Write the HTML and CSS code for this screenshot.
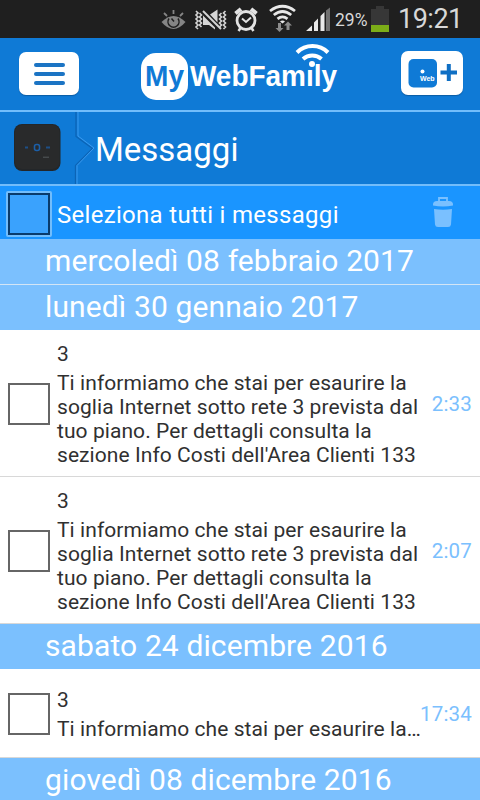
FILE: index.html
```html
<!doctype html>
<html lang="it">
  <head>
    <meta charset="utf-8">
    <title>MyWebFamily - Messaggi</title>
    <link rel="stylesheet" href="styles.css">
  </head>
  <body>
	<div class="statusbar">
		<svg class="status-icons" width="170" height="38" viewBox="160 0 170 38">
			<!-- eye -->
			<path fill="#858585" d="M161.500 22Q173.500 10 185.500 22Q173.500 36 161.500 22z"/>
			<path fill="none" stroke="#858585" stroke-width="1.800" d="M164 13l3 3M173.500 10v4M183 13l-3 3"/>
			<path fill="none" stroke="#1f1f1f" stroke-width="1.500" d="M169 18.500a5.500 5.500 0 1 0 9 0M171.500 18.500l2.500 3"/>
			<!-- vibrate / mute -->
			<g fill="none" stroke="#d5d5d5" stroke-width="1.600">
				<path d="M196 11l2 2-2 2 2 2-2 2 2 2-2 2 2 2-2 2 2 2M199.500 13l2 2-2 2 2 2-2 2 2 2-2 2 2 2"/>
				<path d="M225.500 11l-2 2 2 2-2 2 2 2-2 2 2 2-2 2 2 2-2 2M221.500 13l-2 2 2 2-2 2 2 2-2 2 2 2-2 2"/>
			</g>
			<path fill="#d5d5d5" d="M203 15.500l12 12v2l-6-4.500h-6zM210 14.500l7.500-5v13z"/>
			<path stroke="#d5d5d5" stroke-width="2" d="M203 11l18 18"/>
			<!-- alarm -->
			<g fill="none" stroke="#e3e3e3">
				<circle cx="246" cy="20.500" r="9" stroke-width="2.800"/>
				<path stroke-width="2" d="M242 18.500l4 3.500 5-4.500"/>
				<path stroke-width="4" d="M235.500 13.500l5.500-4.500M251 9l5.500 4.500"/>
				<path stroke-width="2.500" d="M240.500 28l-2 3M251.500 28l2 3"/>
			</g>
			<!-- wifi -->
			<g fill="none" stroke="#e8e8e8" stroke-width="2.800">
				<path d="M270 11Q282.500 1.500 295 11M273.800 15Q282.500 8 291.200 15M277.500 18.800Q282.500 15 287.500 18.800"/>
			</g>
			<path fill="#e8e8e8" d="M280 21.500q2.500-2 5 0l-2.500 2z"/>
			<path fill="#8b8b8b" d="M278 23h3v5h2.500l-4 4-4-4h2.500zM286.500 30h3v-4.500h2.500l-4-4-4 4h2.500z"/>
			<!-- signal -->
			<path fill="#e8e8e8" d="M306 31l6-5.500V31zM314 22.500l4-4V31h-4zM320.500 16l4-4V31h-4z"/>
			<path fill="#707070" d="M326 10.500l4-3V31h-4z"/>
		</svg>
		<span class="percent">29%</span>
		<span class="battery"><i></i></span>
		<span class="clock">19:21</span>
	</div>
	<div class="header">
		<a class="button menu"><i></i><i></i><i></i></a>
		<svg class="logo" width="210" height="72" viewBox="135 38 210 72">
			<rect x="141" y="53" width="47" height="47" rx="15" fill="#fff"/>
			<text class="my" x="145" y="86" textLength="39" lengthAdjust="spacingAndGlyphs">My</text>
			<text class="web" x="190" y="85.500" textLength="147" lengthAdjust="spacingAndGlyphs">WebFamıly</text>
			<circle cx="312" cy="64" r="3" fill="#fff"/>
			<path fill="none" stroke="#fff" stroke-width="4" d="M297 52.500A22 22 0 0 1 328 52.500M303 59A14 14 0 0 1 321.500 59"/>
		</svg>
		<a class="button add">
			<svg width="62" height="44" viewBox="0 0 62 44">
				<rect x="7.500" y="8" width="28.500" height="28.500" rx="5" fill="#0f7ad6"/>
				<circle cx="21.500" cy="20.500" r="2" fill="#fff"/>
				<text class="tiny" x="19" y="30">Web</text>
				<path stroke="#0f6fc4" stroke-width="4" d="M39.500 21.500h16.500M47.800 13v17"/>
			</svg>
		</a>
	</div>
	<div class="titlebar">
		<div class="device">
			<svg width="96" height="72" viewBox="0 112 96 72">
				<rect x="14" y="124" width="46.500" height="47" rx="8" fill="#232629"/>
				<rect x="15" y="125" width="44.500" height="44" rx="7" fill="#292a2b"/>
				<rect x="34.500" y="144.500" width="5" height="6" rx="2" fill="none" stroke="#1c5fa8" stroke-width="1.600"/>
				<path stroke="#1d4f87" stroke-width="1.800" d="M25 147.500h3M46 147.500h4"/>
				<path stroke="#55595c" d="M43 157.200h6"/>
				<path fill="none" stroke="#0b64b6" stroke-width="1.300" d="M76 112v24.500l16.500 12-17 17V184"/>
				<path fill="none" stroke="#3a9af0" stroke-width="1" d="M78 112v24l16 12-17 17.500V184"/>
			</svg>
		</div>
		<h1>Messaggi</h1>
	</div>
	<div class="selectall">
		<span class="check"></span>
		<span class="label">Seleziona tutti i messaggi</span>
		<svg class="trash" width="22" height="32" viewBox="0 0 22 32">
			<path fill="none" stroke="#7ac0ff" stroke-width="1.800" d="M7 6V2h8v4"/>
			<path fill="#7ac0ff" d="M1 8.500q0-3.500 4-3.500h12q4 0 4 3.500v1q-10 2-20 0zM2 13q9 1.500 18 0l-1 15.500q-.3 2.500-3 2.500H6q-2.700 0-3-2.500z"/>
		</svg>
	</div>
	<h2>mercoledì 08 febbraio 2017</h2>
	<h2 class="last">lunedì 30 gennaio 2017</h2>
	<div class="message">
		<span class="check"></span>
		<div class="text">
			<b>3</b>
			<p>Ti informiamo che stai per esaurire la<br>soglia Internet sotto rete 3 prevista dal<br>tuo piano. Per dettagli consulta la<br>sezione Info Costi dell'Area Clienti 133</p>
		</div>
		<span class="time">2:33</span>
	</div>
	<div class="message">
		<span class="check"></span>
		<div class="text">
			<b>3</b>
			<p>Ti informiamo che stai per esaurire la<br>soglia Internet sotto rete 3 prevista dal<br>tuo piano. Per dettagli consulta la<br>sezione Info Costi dell'Area Clienti 133</p>
		</div>
		<span class="time">2:07</span>
	</div>
	<h2 class="last">sabato 24 dicembre 2016</h2>
	<div class="message short">
		<span class="check"></span>
		<div class="text">
			<b>3</b>
			<p>Ti informiamo che stai per esaurire la…</p>
		</div>
		<span class="time">17:34</span>
	</div>
	<h2>giovedì 08 dicembre 2016</h2>
  </body>
</html>
```
FILE: styles.css
```css
*
{
	box-sizing: border-box;
}

body
{
	margin: 0;
	width: 480px;
	height: 800px;
	overflow: hidden;
	background: #fff;
	color: #303030;
	font-family: Roboto, sans-serif;
}

.statusbar
{
	display: flex;
	height: 38px;
	padding-left: 160px;
	background: #1f1f1f;
	color: #d8d8d8;
}

.status-icons
{
	flex: none;
}

.percent
{
	width: 41px;
	padding-left: 5px;
	font-size: 17.5px;
	line-height: 40px;
}

.battery
{
	display: flex;
	align-items: flex-end;
	width: 18px;
	height: 26px;
	margin-top: 6px;
	background: #373737;
	clip-path: polygon(0 3px, 5px 3px, 5px 0, 13px 0, 13px 3px, 100% 3px, 100% 100%, 0 100%);
}

.battery i
{
	width: 100%;
	height: 7px;
	background: #7cad18;
}

.clock
{
	margin-left: 9px;
	font-size: 27px;
	line-height: 38px;
	letter-spacing: -0.5px;
	white-space: nowrap;
}

.header
{
	display: flex;
	align-items: flex-start;
	height: 74px;
	background: #0f7ad6;
	border-bottom: 2px solid #72bdfb;
}

.button
{
	display: flex;
	border-radius: 7px;
	background: #fff;
	box-shadow: 0 1px 1px #0b5ca5;
}

.menu
{
	flex-direction: column;
	align-items: center;
	gap: 5px;
	width: 60px;
	height: 43px;
	margin: 14px 0 0 19px;
	padding-top: 11px;
}

.menu i
{
	width: 31px;
	height: 4px;
	border-radius: 2px;
	background: #1b74c4;
}

.logo
{
	margin-left: 56px;
	overflow: visible;
}

.logo text
{
	font-family: "Liberation Sans", sans-serif;
	font-weight: bold;
	font-size: 30px;
}

.my
{
	fill: #0f7ad6;
}

.web
{
	fill: #fff;
}

.add
{
	width: 62px;
	height: 44px;
	margin: 13px 0 0 56px;
}

.tiny
{
	fill: #fff;
	font: bold 7px "Liberation Sans", sans-serif;
}

.titlebar
{
	display: flex;
	height: 74px;
	background: #0f7ad6;
	border-bottom: 2px solid #72bdfb;
}

.device
{
	width: 95px;
}

h1
{
	margin: 0;
	color: #fff;
	font-size: 33px;
	font-weight: normal;
	line-height: 75px;
}

.selectall
{
	display: flex;
	align-items: center;
	height: 53px;
	padding-left: 6px;
	background: #1a95ff;
	color: #fff;
}

.selectall .check
{
	width: 46px;
	height: 46px;
	margin: 3px 0 0;
	border: 2px solid #72bdfb;
	border-radius: 2px;
	background: #3aa2fd;
	box-shadow: inset 0 0 0 2px #093b6c;
}

.selectall .label
{
	width: 374px;
	padding: 4px 0 0 5px;
	font-size: 24px;
	letter-spacing: 0.3px;
	line-height: 50px;
}

.trash
{
	margin: -2px 0 0 6px;
}

h2
{
	height: 46px;
	margin: 0;
	padding-left: 45px;
	background: #7bc0fe;
	border-bottom: 1px solid #d3e5f5;
	color: #fff;
	font-size: 30px;
	font-weight: normal;
	line-height: 43px;
	letter-spacing: 0.12px;
}

h2.last
{
	height: 45px;
	border-bottom: 0;
}

.message
{
	display: flex;
	align-items: center;
	height: 147px;
	padding: 0 8px;
	border-bottom: 1px solid #d8d8d8;
}

.check
{
	flex: none;
	width: 42px;
	height: 42px;
	margin-top: 2px;
	border: 2px solid #666;
}

.text
{
	align-self: flex-start;
	width: 363px;
	padding: 12px 0 0 7px;
	font-size: 21px;
	line-height: 24px;
	white-space: nowrap;
}

.text b
{
	display: block;
	margin-bottom: 5px;
	font-weight: normal;
}

.text p
{
	margin: 0;
	letter-spacing: 0.07px;
}

.time
{
	flex: 1;
	padding-top: 2px;
	color: #7bc0fe;
	font-size: 20.5px;
	text-align: right;
	letter-spacing: 0.2px;
}

.short
{
	height: 89px;
}

.short .text
{
	padding-top: 19px;
}
```
